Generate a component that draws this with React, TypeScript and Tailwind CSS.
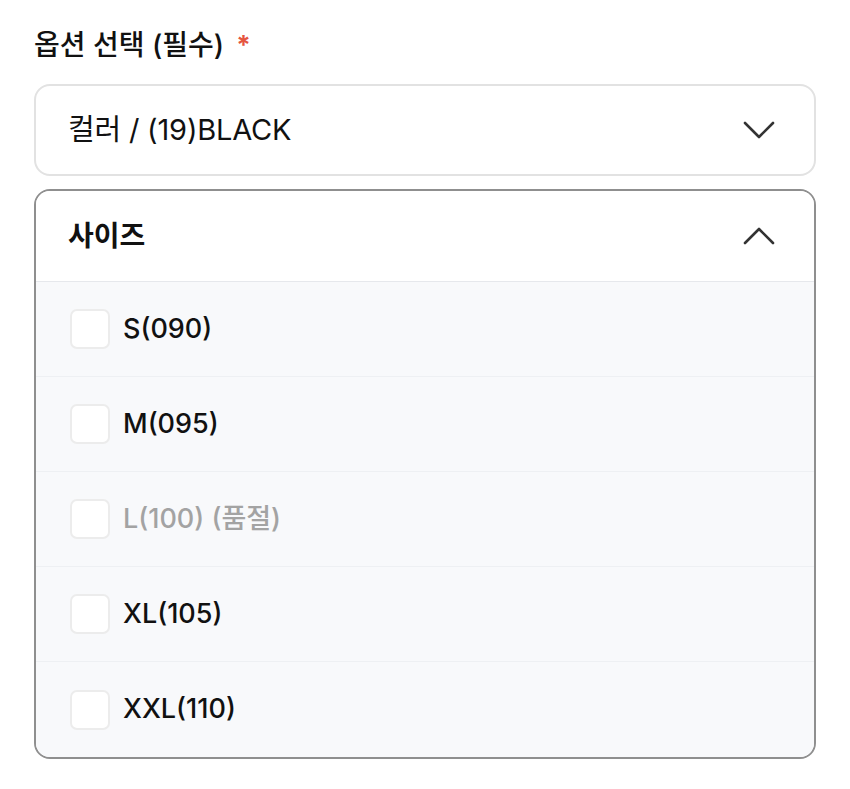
const sizes = [
  { label: "S(090)", soldOut: false },
  { label: "M(095)", soldOut: false },
  { label: "L(100) (품절)", soldOut: true },
  { label: "XL(105)", soldOut: false },
  { label: "XXL(110)", soldOut: false },
];

function Chevron({ up }: { up?: boolean }) {
  return (
    <svg width="34" height="20" viewBox="0 0 34 20" fill="none" className="text-[#333]">
      <path
        d={up ? "M3 17 L17 3 L31 17" : "M3 3 L17 17 L31 3"}
        stroke="currentColor"
        strokeWidth="2.6"
        strokeLinecap="round"
        strokeLinejoin="round"
      />
    </svg>
  );
}

export default function App() {
  return (
    <div
      className="min-h-screen bg-white px-[34px] pt-[25px] text-[#111]"
      style={{ fontFamily: '"Inter", "Noto Sans CJK KR", sans-serif' }}
    >
      <div className="flex items-center gap-[12px] text-[28px] font-medium leading-[40px]">
        <span>옵션 선택 (필수)</span>
        <span className="text-[26px] font-bold text-[#e5553f]">*</span>
      </div>

      {/* color select (collapsed) */}
      <div className="mt-[19px] flex h-[92px] items-center justify-between rounded-[16px] border-2 border-[#e2e2e2] pl-[32px] pr-[38px]">
        <span className="text-[29px] tracking-[-0.2px]">컬러 / (19)BLACK</span>
        <Chevron />
      </div>

      {/* size select (expanded) */}
      <div className="mt-[13px] overflow-hidden rounded-[16px] border-2 border-[#8f8f8f]">
        <div className="flex h-[91px] items-center justify-between border-b border-[#e6e8ec] bg-white pl-[32px] pr-[38px]">
          <span className="text-[28px] font-bold">사이즈</span>
          <Chevron up />
        </div>
        <ul className="bg-[#f8f9fb]">
          {sizes.map((s, i) => (
            <li
              key={s.label}
              className={`flex h-[95px] items-center gap-[13px] pl-[34px] ${
                i < sizes.length - 1 ? "border-b border-[#eef0f3]" : ""
              }`}
            >
              <span className="h-[40px] w-[40px] rounded-[7px] border-2 border-[#ececec] bg-white" />
              <span
                className={`text-[27px] font-medium ${
                  s.soldOut ? "text-[#a3a3a3]" : "text-[#111]"
                }`}
              >
                {s.label}
              </span>
            </li>
          ))}
        </ul>
      </div>
    </div>
  );
}
